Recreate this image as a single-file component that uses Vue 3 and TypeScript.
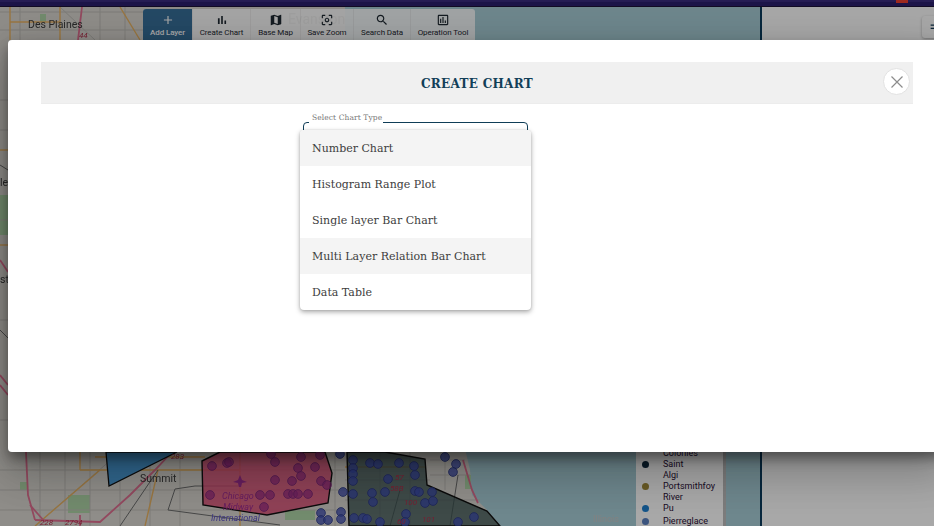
<script setup lang="ts">
interface Tool { label: string; path: string; active?: boolean }
const tools: Tool[] = [
  { label: 'Add Layer', active: true, path: 'M19 13h-6v6h-2v-6H5v-2h6V5h2v6h6v2z' },
  { label: 'Create Chart', path: 'M5 9.2h3V19H5zM10.6 5h2.8v14h-2.8zm5.6 8H19v6h-2.8z' },
  { label: 'Base Map', path: 'M20.5 3l-.16.03L15 5.1 9 3 3.36 4.9c-.21.07-.36.25-.36.48V20.5c0 .28.22.5.5.5l.16-.03L9 18.9l6 2.1 5.64-1.9c.21-.07.36-.25.36-.48V3.5c0-.28-.22-.5-.5-.5zM15 19l-6-2.11V5l6 2.11V19z' },
  { label: 'Save Zoom', path: 'M5 15H3v4c0 1.1.9 2 2 2h4v-2H5v-4zM5 5h4V3H5c-1.1 0-2 .9-2 2v4h2V5zm14-2h-4v2h4v4h2V5c0-1.1-.9-2-2-2zm0 16h-4v2h4c1.1 0 2-.9 2-2v-4h-2v4zM12 8c-2.21 0-4 1.79-4 4s1.79 4 4 4 4-1.79 4-4-1.79-4-4-4zm0 6c-1.1 0-2-.9-2-2s.9-2 2-2 2 .9 2 2-.9 2-2 2z' },
  { label: 'Search Data', path: 'M15.5 14h-.79l-.28-.27C15.41 12.59 16 11.11 16 9.5 16 5.91 13.09 3 9.5 3S3 5.91 3 9.5 5.91 16 9.5 16c1.61 0 3.09-.59 4.23-1.57l.27.28v.79l5 4.99L20.49 19l-4.99-5zm-6 0C7.01 14 5 11.99 5 9.5S7.01 5 9.5 5 14 7.01 14 9.5 11.99 14 9.5 14z' },
  { label: 'Operation Tool', path: 'M19 3H5c-1.1 0-2 .9-2 2v14c0 1.1.9 2 2 2h14c1.1 0 2-.9 2-2V5c0-1.1-.9-2-2-2zm0 16H5V5h14v14zM7 10h2v7H7zm4-3h2v10h-2zm4 6h2v4h-2z' },
]
const chartTypes = [
  { label: 'Number Chart', shaded: true },
  { label: 'Histogram Range Plot', shaded: false },
  { label: 'Single layer Bar Chart', shaded: false },
  { label: 'Multi Layer Relation Bar Chart', shaded: true },
  { label: 'Data Table', shaded: false },
]
const legend = [
  { name: ['Colonies'], color: '' },
  { name: ['Saint', 'Algi'], color: '#10293f' },
  { name: ['Portsmithfoy', 'River'], color: '#a08a3a' },
  { name: ['Pu'], color: '#1f80d0' },
  { name: ['Pierreglace'], color: '#5a80c0' },
]
const pinkDots: [number, number][] = [
  [212, 466], [227, 463], [229, 462], [271, 454], [275, 462], [301, 457], [320, 455], [298, 468], [315, 467],
  [301, 476], [275, 480], [292, 481], [321, 481], [327, 485], [210, 495], [260, 495], [270, 495], [288, 494],
  [293, 494], [298, 494], [308, 494], [264, 507],
]
const blueDots: [number, number][] = [
  [340, 454], [353, 460], [353, 468], [353, 474], [353, 481], [370, 463], [378, 464], [399, 463], [414, 466],
  [415, 475], [388, 479], [343, 492], [353, 494], [372, 493], [385, 492], [373, 502], [415, 491], [419, 492],
  [432, 492], [425, 503], [433, 501], [321, 513], [321, 520], [328, 520], [341, 512], [341, 519], [354, 518],
  [363, 518], [367, 519], [380, 522], [406, 514], [405, 522], [458, 522], [474, 517], [445, 457], [456, 464], [453, 472],
]
const streets = [
  'M0 470 H345', 'M0 490 H345', 'M0 510 H345', 'M40 452 V526', 'M65 452 V526', 'M120 452 V526', 'M180 452 V526',
  'M335 452 V526', 'M345 500 H480', 'M345 480 H430', 'M380 452 V526', 'M410 452 V526', 'M0 12 H143', 'M0 30 H143',
  'M20 7 V40', 'M100 7 V40', 'M125 7 V40', 'M0 100 H8', 'M0 130 H8', 'M0 220 H8', 'M0 320 H8', 'M0 420 H8',
  'M120 452 L35 526', 'M60 7 L95 40', 'M90 452 V526', 'M150 452 V526', 'M430 460 H465', 'M430 475 H470', 'M445 452 V490',
]
const wideRoads = [
  'M10 7 V40', 'M10 22 H60', 'M60 7 V40', 'M120 7 L140 40', 'M0 150 H8', 'M0 245 H8',
  'M80 452 V470', 'M80 470 H240', 'M35 526 L100 470', 'M95 457 H205', 'M240 452 V526', 'M158 470 L145 526',
  'M345 467 H425',
]
const motorways = [
  'M82 7 L78 40', 'M0 260 L8 272', 'M0 375 L8 385', 'M0 385 L8 395',
  'M26 452 L28 495 L35 520', 'M35 520 L100 522 L130 495 L155 470 L172 452', 'M80 515 L80 526', 'M30 505 L45 522',
  'M463 460 L472 490 L478 503',
]
</script>

<template>
  <div class="page">
    <header class="topbar"><span class="alert"></span></header>
    <main class="workspace">
      <section class="map">
        <svg class="map-art" viewBox="0 0 760 519" width="760" height="519" aria-hidden="true">
          <g transform="translate(0 -7)">
            <rect x="0" y="0" width="760" height="526" fill="#d9d7d1" />
            <path d="M345 0 L760 0 L760 526 L500 526 L487 510 L472 495 L470 470 L463 440 L400 300 L345 60 Z" fill="#a8cdd6" />
            <g fill="#aed4a6">
              <rect x="68" y="495" width="22" height="18" />
              <rect x="20" y="482" width="8" height="8" />
              <rect x="285" y="510" width="30" height="10" />
              <rect x="40" y="14" width="6" height="8" />
              <rect x="0" y="195" width="8" height="40" />
              <rect x="465" y="475" width="6" height="14" />
            </g>
            <g fill="none" stroke="#bdbbb5" stroke-width="1">
              <path v-for="d in streets" :key="d" :d="d" />
            </g>
            <g fill="none" stroke="#e8b262" stroke-width="1.4">
              <path v-for="d in wideRoads" :key="d" :d="d" />
            </g>
            <g fill="none" stroke="#df6f90" stroke-width="1.8">
              <path v-for="d in motorways" :key="d" :d="d" />
            </g>
            <path d="M175 489 L195 486 H240 M168 510 L175 489 M168 510 L280 525 M120 526 L158 470 M0 165 L8 170 M0 330 L8 338 M400 490 L390 526 M458 475 L450 526" fill="none" stroke="#6c6c6c" stroke-width="1" />
            <polygon points="106,452 109,486 177,452" fill="#4b9dd8" stroke="#111" stroke-width="1.3" />
            <polygon points="202,461 220,452 325,452 332,473 328,503 267,515 203,505" fill="#dc4a74" fill-opacity=".82" stroke="#111" stroke-width="1.4" />
            <polygon points="347,452 349,526 500,526 487,511 427,485 425,459 385,452" fill="#38504f" fill-opacity=".76" stroke="#111" stroke-width="1.4" />
            <g fill="#9a2d86" fill-opacity=".7" stroke="#7d2a78" stroke-width=".8">
              <circle v-for="(p, i) in pinkDots" :key="i" :cx="p[0]" :cy="p[1]" r="4.4" />
            </g>
            <g fill="#3f4fb0" fill-opacity=".78" stroke="#2f3a85" stroke-width=".8">
              <circle v-for="(p, i) in blueDots" :key="i" :cx="p[0]" :cy="p[1]" r="4.4" />
            </g>
            <path d="M238 480 l2 -5 l2 5 l5 2 l-5 1 l-1 4 l-2 0 l-1 -4 l-5 -1 z" fill="#9b2e8f" />
            <g fill="#3c3c3c">
              <text x="28" y="28" font-size="10.5">Des Plaines</text>
              <text x="140" y="482" font-size="10.5">Summit</text>
              <text x="288" y="24" font-size="14" fill="#8a8a8a">Evanston</text>
              <text x="0" y="186" font-size="10.5">le</text>
              <text x="0" y="283" font-size="10.5">st.</text>
              <text x="593" y="522" font-size="9" fill="#c4c4c4">Illinois</text>
            </g>
            <g fill="#9b2e8f" font-size="9" font-style="italic">
              <text x="222" y="499">Chicago</text>
              <text x="223" y="510">Midway</text>
              <text x="211" y="521" fill="#5b4fc0">International</text>
            </g>
            <g font-size="8" font-style="italic" fill="#b2304c">
              <text x="79" y="38">44</text>
              <text x="171" y="459">283</text>
              <text x="40" y="525">228</text>
              <text x="65" y="525">2794</text>
              <text x="395" y="480">57</text>
              <text x="390" y="491">58B</text>
              <text x="404" y="505">100</text>
              <text x="397" y="524">60</text>
              <text x="422" y="522">101</text>
            </g>
          </g>
        </svg>

        <nav class="toolbar">
          <button v-for="t in tools" :key="t.label" class="tool" :class="{ active: t.active }" type="button">
            <svg viewBox="0 0 24 24" width="14" height="14"><path :d="t.path" fill="currentColor" /></svg>
            <span>{{ t.label }}</span>
          </button>
        </nav>

        <aside class="legend">
          <div v-for="row in legend" :key="row.name[0]" class="legend-row">
            <i class="dot" :style="{ background: row.color || 'transparent' }"></i>
            <div>
              <div v-for="line in row.name" :key="line">{{ line }}</div>
            </div>
          </div>
        </aside>
      </section>

      <aside class="side">
        <div class="side-tab">
          <svg viewBox="0 0 24 24" width="10" height="10"><path d="M4 6h16v3H4zM4 14h16v3H4z" fill="#143e5a" /></svg>
        </div>
      </aside>
    </main>

    <div class="scrim">
      <div class="modal">
        <div class="modal-head">
          <h2>CREATE CHART</h2>
          <button class="close" type="button" aria-label="Close">
            <svg viewBox="0 0 14 14" width="14" height="14"><path d="M1.5 1.5 L12.5 12.5 M12.5 1.5 L1.5 12.5" stroke="#8c8c8c" stroke-width="1.2" fill="none" /></svg>
          </button>
        </div>

        <div class="field">
          <span class="field-label">Select Chart Type</span>
          <div class="field-box"></div>
          <ul class="menu">
            <li v-for="c in chartTypes" :key="c.label" :class="{ shaded: c.shaded }">{{ c.label }}</li>
          </ul>
        </div>
      </div>
    </div>
  </div>
</template>

<style scoped>
.page {
  position: relative;
  width: 934px;
  height: 526px;
  overflow: hidden;
  display: flex;
  flex-direction: column;
  background: #fff;
  font-family: "Roboto", "Liberation Sans", sans-serif;
}
.topbar {
  position: relative;
  height: 7px;
  flex: none;
  background: #2c2170;
  border-top: 2px solid #3a2c80;
  border-bottom: 1px solid #1c1238;
  box-sizing: border-box;
}
.alert {
  position: absolute;
  left: 896px;
  top: -2px;
  width: 12px;
  height: 3px;
  background: #f04030;
}
.workspace {
  flex: 1;
  display: flex;
  min-height: 0;
}
.map {
  position: relative;
  width: 760px;
  flex: none;
  overflow: hidden;
}
.map-art {
  position: absolute;
  left: 0;
  top: 0;
  display: block;
  filter: blur(.6px);
}
.toolbar {
  position: absolute;
  left: 143px;
  top: 2px;
  display: flex;
  height: 42px;
  width: 332px;
  border-radius: 3px 3px 0 0;
  background: rgba(255, 255, 255, .88);
  overflow: hidden;
}
.tool {
  display: flex;
  flex-direction: column;
  align-items: center;
  gap: 1px;
  padding: 4px 0 0;
  border: 0;
  border-left: 1px solid rgba(0, 0, 0, .05);
  background: transparent;
  color: #1f2a33;
  font: 400 8px/10px "Roboto", sans-serif;
  letter-spacing: -.1px;
  white-space: nowrap;
}
.tool:nth-child(1) { width: 49px; }
.tool:nth-child(2) { width: 58px; }
.tool:nth-child(3) { width: 50px; }
.tool:nth-child(4) { width: 53px; }
.tool:nth-child(5) { width: 57px; }
.tool:nth-child(6) { width: 65px; }
.tool.active {
  background: #386f9a;
  color: #fff;
  border-left: 0;
  font-weight: 500;
}
.legend {
  position: absolute;
  left: 636px;
  top: 440px;
  width: 90px;
  height: 90px;
  padding-top: 1px;
  box-sizing: border-box;
  background: #fff;
  border-right: 3px solid #bcbcbc;
  font-size: 9px;
  line-height: 11px;
  color: #2a1036;
}
.legend-row {
  display: flex;
  gap: 14px;
  padding-left: 6px;
}
.legend-row:nth-child(4) { margin-bottom: 2px; }
.dot {
  flex: none;
  width: 7px;
  height: 7px;
  margin-top: 2px;
  border-radius: 50%;
}
.side {
  flex: 1;
  position: relative;
  background: #fff;
  border-left: 2px solid #0b3c5d;
}
.side-tab {
  position: absolute;
  right: -6px;
  top: 9px;
  width: 11px;
  height: 22px;
  display: flex;
  align-items: center;
  padding-left: 7px;
  background: #fff;
  border-radius: 3px;
  box-shadow: 0 1px 3px rgba(0, 0, 0, .3);
}
.scrim {
  position: absolute;
  inset: 0;
  background: rgba(0, 0, 0, .34);
  padding: 40px 0 0 8px;
}
.modal {
  position: relative;
  width: 938px;
  height: 412px;
  padding: 22px 33px;
  box-sizing: border-box;
  background: #fff;
  border-radius: 4px;
  box-shadow: 0 6px 12px rgba(0, 0, 0, .3), 0 11px 15px -7px rgba(0, 0, 0, .2), 0 24px 38px 3px rgba(0, 0, 0, .14), 0 9px 46px 8px rgba(0, 0, 0, .12);
}
.modal-head {
  position: relative;
  height: 42px;
  display: flex;
  align-items: center;
  justify-content: center;
  background: #f0f0f0;
  border-bottom: 1px solid #ececec;
  box-sizing: border-box;
}
.modal-head h2 {
  margin: 2px 0 0;
  font: 700 12px/1 "DejaVu Serif", serif;
  letter-spacing: .3px;
  color: #123f58;
}
.close {
  position: absolute;
  right: 3px;
  top: 6px;
  width: 27px;
  height: 27px;
  padding: 0;
  display: flex;
  align-items: center;
  justify-content: center;
  border: 1px solid #e2e2e2;
  border-radius: 50%;
  background: #fff;
}
.field {
  position: relative;
  width: 225px;
  margin: 18px 0 0 262px;
  font-family: "DejaVu Serif", serif;
}
.field-box {
  height: 30px;
  border: 1px solid #0f3d57;
  border-radius: 4px;
  box-sizing: border-box;
}
.field-label {
  position: absolute;
  left: 6px;
  top: -9px;
  padding: 0 1px 0 3px;
  font-size: 7.5px;
  line-height: 10px;
  letter-spacing: .1px;
  color: #777;
  background: #fff;
  z-index: 1;
}
.menu {
  position: absolute;
  left: -3px;
  top: 8px;
  width: 231px;
  margin: 0;
  padding: 0;
  list-style: none;
  background: #fff;
  border-radius: 4px;
  overflow: hidden;
  box-shadow: 0 2px 5px rgba(0, 0, 0, .35), 0 0 2px rgba(0, 0, 0, .12);
  z-index: 2;
}
.menu li {
  height: 36px;
  padding-left: 12px;
  font-size: 11px;
  line-height: 37px;
  color: #3d3d3d;
}
.menu li.shaded { background: #f4f4f4; }
</style>
